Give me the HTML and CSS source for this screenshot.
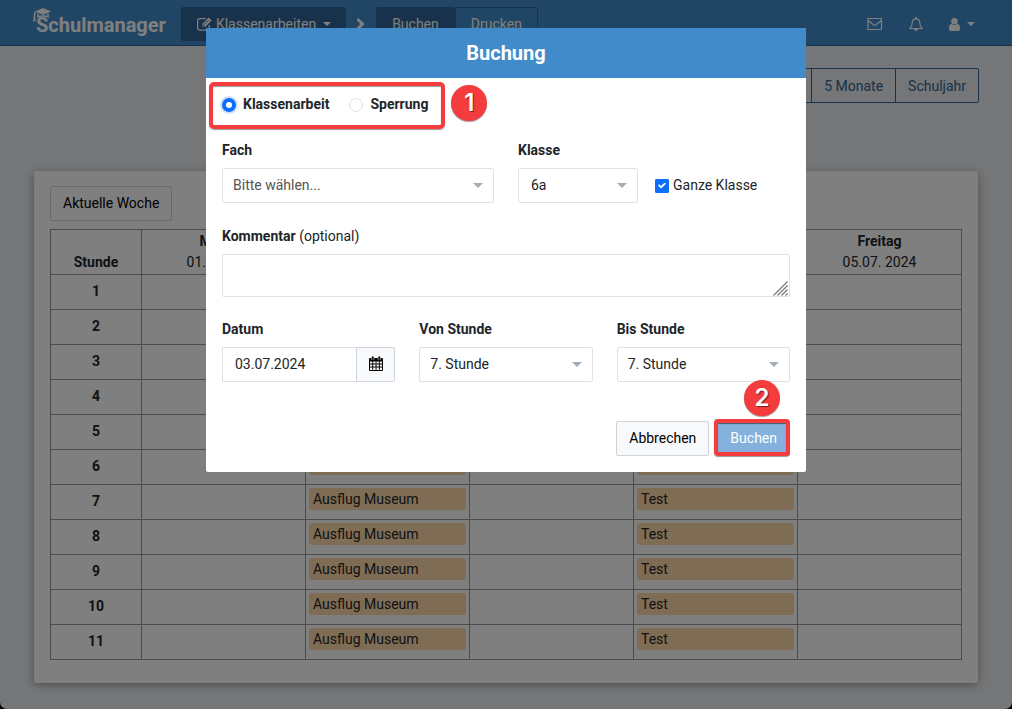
FILE: index.html
```html
<!DOCTYPE html>
<html lang="de">
<head>
<meta charset="utf-8">
<meta name="viewport" content="width=device-width, initial-scale=1">
<title>Schulmanager – Klassenarbeiten</title>
<link rel="stylesheet" href="styles.css">
</head>
<body>
<div class="page">
  <header class="navbar">
    <a class="logo" href="#">
      <svg class="logo-cap" viewBox="0 0 20 16" width="20" height="16" aria-hidden="true">
        <path d="M10 0 18 3.500 10 7 2 3.500z" fill="#fff"/>
        <path d="M2 3.500 1.200 11M5 5.500V9c2-1.500 8-1.500 10 0V5.500" fill="none" stroke="#fff" stroke-width="1.500"/>
        <path d="M0 13.500 1 9.500h1.200l.6 3.500z" fill="#fff"/>
      </svg>
      <span>Schulmanager</span>
    </a>
    <button class="nav-btn nav-active nav-menu" type="button">
      <svg viewBox="0 0 16 14" width="16" height="14" aria-hidden="true">
        <path d="M12.200 8v3.200a2 2 0 0 1-2 2H2.700a2 2 0 0 1-2-2V3.700a2 2 0 0 1 2-2h6" fill="none" stroke="currentColor" stroke-width="1.300"/>
        <path d="M5.500 6.800 11.700.6l2.900 2.900-6.200 6.200H5.500z" fill="currentColor"/>
        <path d="m7 7.700 4.500-4.500M6.400 8v1h1" fill="none" stroke="#2e6494" stroke-width=".8"/>
      </svg>
      <span>Klassenarbeiten</span>
      <span class="caret"></span>
    </button>
    <svg class="chevron" viewBox="0 0 10 14" width="10" height="14" aria-hidden="true"><path d="m1.500 2 5 5-5 5" fill="none" stroke="#fff" stroke-width="3"/></svg>
    <nav class="nav-group">
      <a class="nav-btn nav-active" href="#">Buchen</a>
      <a class="nav-btn" href="#">Drucken</a>
    </nav>
    <div class="nav-icons">
      <button class="icon-btn" type="button" aria-label="Nachrichten">
        <svg viewBox="0 0 16 14" width="16" height="14"><path d="M1 1.500h13.500v11H1zM1.300 3.500l5.200 4.300q1.300 1 2.600 0l5.200-4.300" fill="none" stroke="currentColor" stroke-width="1.200"/></svg>
      </button>
      <button class="icon-btn" type="button" aria-label="Benachrichtigungen">
        <svg viewBox="0 0 14 15" width="14" height="15"><path d="M7 1.800c-2.600 0-3.800 1.900-3.800 4 0 3-.8 4.400-2.200 5.700h12c-1.400-1.300-2.200-2.700-2.200-5.700 0-2.100-1.200-4-3.800-4z" fill="none" stroke="currentColor" stroke-width="1.200"/><path d="M7 0v2" stroke="currentColor" stroke-width="1.400"/><path d="M5 12h4a2 2 0 0 1-4 0z" fill="currentColor"/></svg>
      </button>
      <button class="icon-btn user-btn" type="button" aria-label="Benutzer">
        <svg viewBox="0 0 11 13" width="11" height="13"><circle cx="5.500" cy="3.300" r="3.200" fill="currentColor"/><path d="M2.600 5.800q2.900 2.400 5.800 0C10.300 6 11 8 11 10.400c0 1.600-.8 2.600-2 2.600H2c-1.200 0-2-1-2-2.600C0 8 .7 6 2.600 5.800z" fill="currentColor"/></svg>
        <span class="caret"></span>
      </button>
    </div>
  </header>

  <main class="content">
    <div class="periods">
      <button class="period" type="button">4 Wochen</button>
      <button class="period" type="button">5 Monate</button>
      <button class="period" type="button">Schuljahr</button>
    </div>
    <section class="panel">
      <button class="btn" type="button">Aktuelle Woche</button>
      <table class="plan">
        <thead>
          <tr>
            <th class="hour">Stunde</th>
            <th>Montag<span>01.07. 2024</span></th>
            <th>Dienstag<span>02.07. 2024</span></th>
            <th>Mittwoch<span>03.07. 2024</span></th>
            <th>Donnerstag<span>04.07. 2024</span></th>
            <th>Freitag<span>05.07. 2024</span></th>
          </tr>
        </thead>
        <tbody>
          <tr><th>1</th><td></td><td></td><td></td><td></td><td></td></tr>
          <tr><th>2</th><td></td><td></td><td></td><td></td><td></td></tr>
          <tr><th>3</th><td></td><td></td><td></td><td></td><td></td></tr>
          <tr><th>4</th><td></td><td></td><td></td><td></td><td></td></tr>
          <tr><th>5</th><td></td><td></td><td></td><td></td><td></td></tr>
          <tr><th>6</th><td></td><td><div class="event">Ausflug Museum</div></td><td></td><td><div class="event">Test</div></td><td></td></tr>
          <tr><th>7</th><td></td><td><div class="event">Ausflug Museum</div></td><td></td><td><div class="event">Test</div></td><td></td></tr>
          <tr><th>8</th><td></td><td><div class="event">Ausflug Museum</div></td><td></td><td><div class="event">Test</div></td><td></td></tr>
          <tr><th>9</th><td></td><td><div class="event">Ausflug Museum</div></td><td></td><td><div class="event">Test</div></td><td></td></tr>
          <tr><th>10</th><td></td><td><div class="event">Ausflug Museum</div></td><td></td><td><div class="event">Test</div></td><td></td></tr>
          <tr><th>11</th><td></td><td><div class="event">Ausflug Museum</div></td><td></td><td><div class="event">Test</div></td><td></td></tr>
        </tbody>
      </table>
    </section>
  </main>
</div>

<div class="backdrop">
  <form class="modal" role="dialog" aria-labelledby="modal-title">
    <h1 class="modal-title" id="modal-title">Buchung</h1>
    <div class="modal-body">
      <div class="kind">
        <label class="radio"><input type="radio" name="kind" checked>Klassenarbeit</label>
        <label class="radio"><input type="radio" name="kind">Sperrung</label>
        <span class="badge badge-one">1</span>
      </div>

      <div class="row two">
        <div class="field">
          <label for="subject">Fach</label>
          <div class="select"><select id="subject" class="placeholder"><option>Bitte wählen...</option></select></div>
        </div>
        <div class="class-row">
          <div class="field class-field">
            <label for="class">Klasse</label>
            <div class="select"><select id="class" class="indented"><option>6a</option></select></div>
          </div>
          <label class="check"><input type="checkbox" checked>Ganze Klasse</label>
        </div>
      </div>

      <div class="field comment">
        <label for="comment">Kommentar <span class="optional">(optional)</span></label>
        <div class="area">
          <textarea id="comment"></textarea>
          <svg class="grip" viewBox="0 0 15 15" width="15" height="15" aria-hidden="true"><path d="M.5 14.500l14-14M4.500 14.500l10-10M8.500 14.500l6-6M12.500 14.500l2-2" stroke="#777" stroke-width="1.200" fill="none"/></svg>
        </div>
      </div>

      <div class="row three">
        <div class="field">
          <label for="date">Datum</label>
          <div class="date">
            <input id="date" type="text" value="03.07.2024">
            <button type="button" aria-label="Kalender">
              <svg viewBox="0 0 14 15" width="14" height="15"><path fill-rule="evenodd" d="M1 2h12q1 0 1 1v11q0 1-1 1H1q-1 0-1-1V3q0-1 1-1zM1 5.500v2h2.300v-2zm3.200 0v2h2.400v-2zm3.300 0v2h2.400v-2zm3.300 0v2H13v-2zM1 8.400v2.200h2.300V8.400zm3.200 0v2.200h2.400V8.400zm3.300 0v2.200h2.400V8.400zm3.300 0v2.200H13V8.400zM1 11.500V14h2.300v-2.500zm3.200 0V14h2.400v-2.500zm3.300 0V14h2.400v-2.500zm3.300 0V14H13v-2.500z" fill="#000"/><path d="M3.700 1v2.500M10.300 1v2.500" stroke="#f8f9fa" stroke-width="3"/><path d="M3.700.5v3M10.300.5v3" stroke="#000" stroke-width="1.800"/></svg>
            </button>
          </div>
        </div>
        <div class="field">
          <label for="from">Von Stunde</label>
          <div class="select"><select id="from"><option>7. Stunde</option></select></div>
        </div>
        <div class="field">
          <label for="to">Bis Stunde</label>
          <div class="select"><select id="to"><option>7. Stunde</option></select></div>
        </div>
      </div>

      <div class="actions">
        <button class="btn" type="button">Abbrechen</button>
        <div class="submit">
          <button class="btn primary" type="submit">Buchen</button>
          <span class="badge badge-two">2</span>
        </div>
      </div>
    </div>
  </form>
</div>
</body>
</html>
```
FILE: styles.css
```css
* { box-sizing: border-box; }

html { background: #000; }

body {
  margin: 0;
  font-family: Roboto, "Liberation Sans", sans-serif;
  font-size: 14px;
  line-height: 21px;
  color: #212529;
}

button, input, select, textarea { font: inherit; color: inherit; }
button { cursor: pointer; }
a { color: inherit; text-decoration: none; }

.page {
  min-height: 100vh;
  background: #ebedf0;
  border-radius: 0 0 7px 7px;
}

/* Navigation */
.navbar {
  display: flex;
  align-items: center;
  height: 46px;
  padding: 3px 34px 0;
  background: #428bca;
  border-bottom: 1px solid #2e6494;
  color: #fff;
}

.logo {
  position: relative;
  margin-right: 15px;
  padding: 3px 0 0 2px;
  font-size: 20px;
  font-weight: 700;
}

.logo-cap { position: absolute; left: -1px; top: -4px; }

.nav-btn {
  display: flex;
  align-items: center;
  gap: 3px;
  height: 34px;
  padding: 0 15px;
  border: 1px solid #2e6494;
  border-radius: 2px;
  background: none;
  color: #fff;
}

.nav-menu { padding-right: 14px; }
.nav-active { background: #2e6494; }

.caret {
  margin-left: 4px;
  border: 4px solid transparent;
  border-top-color: currentColor;
  border-bottom: 0;
}

.chevron { margin: 0 10px; flex: none; }
.nav-group { display: flex; }
.nav-icons { display: flex; align-items: center; gap: 26px; margin-left: auto; padding-right: 3px; }
.icon-btn { display: flex; align-items: center; padding: 0; border: 0; background: none; color: #fff; }
.user-btn { gap: 3px; }

/* Week plan */
.content { padding: 22px 34px 26px; }
.periods { display: flex; justify-content: flex-end; height: 35px; margin-right: -1px; }

.period {
  margin-left: -1px;
  padding: 2px 12px 0;
  border: 1px solid #2e6494;
  background: none;
  color: #2e6494;
}

.period:last-child { border-radius: 0 2px 2px 0; }

.panel {
  margin-top: 68px;
  padding: 15px 16px 23px;
  background: #fff;
  border-radius: 2px;
  box-shadow: 0 2px 10px rgba(0, 0, 0, 0.35);
}

.btn {
  height: 35px;
  padding: 0 12px;
  border: 1px solid #ced4da;
  border-radius: 2px;
  background: #f8f9fa;
  color: #000;
}

.panel .btn { background: none; }

.plan {
  width: 100%;
  margin-top: 8px;
  table-layout: fixed;
  border-collapse: collapse;
}

.plan th, .plan td { border: 1px solid #999; }
.plan thead th { height: 45px; padding: 1px 0; vertical-align: bottom; }
.plan thead span { display: block; font-weight: 400; }
.plan .hour { width: 91px; }
.plan tbody th { height: 35px; padding: 0 0 2px; }
.plan td { padding: 3px; vertical-align: top; }

.event {
  height: 22px;
  padding: 0 4px;
  border-radius: 3px;
  background: #ffd8a8;
  line-height: 23px;
}

/* Dialog */
.backdrop {
  position: fixed;
  inset: 0;
  padding: 28px 16px;
  overflow: auto;
  background: rgba(0, 0, 0, 0.5);
}

.modal { max-width: 600px; margin: 0 auto; background: #fff; border-radius: 2px; }

.modal-title {
  margin: 0;
  padding: 10px;
  font-size: 20px;
  line-height: 30px;
  text-align: center;
  background: #428bca;
  color: #fff;
}

.modal-body { padding: 16px; }

.kind { position: relative; display: flex; gap: 20px; width: fit-content; font-weight: 700; }

.kind::after {
  content: "";
  position: absolute;
  inset: -12px -17px -14px -13px;
  border: 4px solid #f43b3e;
  border-radius: 5px;
  box-shadow: 0 1px 1px rgba(0, 0, 0, 0.4), inset 0 1px 1px rgba(0, 0, 0, 0.4);
  pointer-events: none;
}

.radio { display: flex; align-items: center; gap: 7px; }

.radio input {
  width: 14px;
  height: 14px;
  margin: 0;
  appearance: none;
  border: 1px solid #dee2e6;
  border-radius: 50%;
  background: #fff;
}

.radio input:checked { border: 4px solid #0d6efd; box-shadow: 0 0 0 2px #cfe2f5; }

.badge {
  position: absolute;
  z-index: 1;
  width: 36px;
  height: 36px;
  border-radius: 50%;
  background: #f43b3e;
  box-shadow: 0 1px 1px rgba(0, 0, 0, 0.4);
  color: #fff;
  font: 600 24px/36px Inter, sans-serif;
  text-align: center;
  text-shadow: 1px 1px 1px rgba(0, 0, 0, 0.5);
}

.badge-one { left: calc(100% + 23px); top: -9px; }
.badge-two { right: 10px; top: -41px; }

.row { display: grid; gap: 24px; }
.two { grid-template-columns: 1fr 1fr; margin-top: 25px; }
.three { grid-template-columns: 1fr 1fr 1fr; margin-top: 22px; }
.field { display: flex; flex-direction: column; gap: 7px; }
.field > label { font-weight: 700; }
.field .optional { font-weight: 400; }
.class-row { display: flex; align-items: flex-end; gap: 17px; }
.class-field { flex: 0 0 120px; }
.check { display: flex; align-items: center; gap: 4px; height: 35px; }

.check input {
  display: grid;
  place-items: center;
  width: 14px;
  height: 14px;
  margin: 0;
  appearance: none;
  border: 1px solid #adb5bd;
  border-radius: 1px;
  background: #fff;
}

.check input:checked { border-color: #0d6efd; background: #0d6efd; }

.check input:checked::after {
  content: "";
  width: 8px;
  height: 6px;
  background: #fff;
  clip-path: polygon(0 50%, 15% 30%, 38% 60%, 85% 0, 100% 20%, 38% 100%);
}

.select { position: relative; }

.select::after {
  content: "";
  position: absolute;
  right: 11px;
  top: 15px;
  border: 5px solid transparent;
  border-top-color: #a3adb8;
  border-bottom: 0;
  pointer-events: none;
}

select, textarea, .date input {
  display: block;
  width: 100%;
  height: 35px;
  margin: 0;
  padding: 0 24px 0 10px;
  appearance: none;
  border: 1px solid #dee2e6;
  border-radius: 2px;
  background: #fff;
}

.indented { padding-left: 12px; }
.placeholder { color: #555; }
.comment { margin-top: 23px; }
.area { position: relative; }
textarea { height: 43px; padding: 8px 12px; resize: none; }
.grip { position: absolute; right: 2px; bottom: 1px; }
.date { display: flex; }
.date input { flex: 1; min-width: 0; padding: 0 12px 2px; border-right: 0; border-radius: 2px 0 0 2px; }

.date button {
  display: flex;
  align-items: center;
  justify-content: center;
  width: 39px;
  padding: 0 0 2px;
  border: 1px solid #ced4da;
  border-radius: 0 2px 2px 0;
  background: #f8f9fa;
}

.actions { display: flex; justify-content: flex-end; gap: 8px; margin-top: 39px; }
.submit { position: relative; }
.primary { border-color: #84b2dc; background: #84b2dc; color: #fff; }

.submit::after {
  content: "";
  position: absolute;
  inset: -2px 0 0 -3px;
  border: 4px solid #f43b3e;
  border-radius: 4px;
  box-shadow: 0 1px 1px rgba(0, 0, 0, 0.4), inset 0 1px 1px rgba(0, 0, 0, 0.5);
  pointer-events: none;
}
```
